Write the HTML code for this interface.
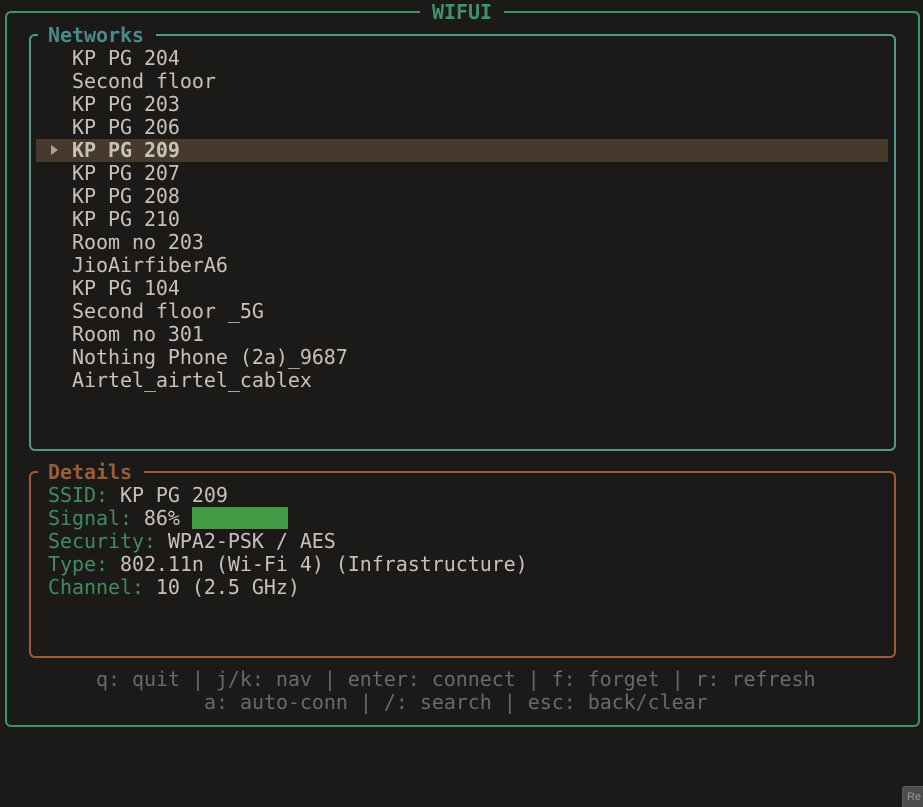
<!DOCTYPE html>
<html><head><meta charset="utf-8"><style>
html,body{margin:0;padding:0;background:#1c1a19;width:923px;height:807px;overflow:hidden}
body{position:relative;font-family:"DejaVu Sans Mono","Liberation Mono",monospace;font-size:20px;color:#c9c1b8;letter-spacing:-0.05px}
.t{position:absolute;line-height:23px;height:23px;white-space:pre}
.box{position:absolute;border:2px solid;border-radius:6px;box-sizing:border-box}
.gap{position:absolute;background:#1c1a19;height:6px}
.g{color:#3f8c5c}
</style></head><body>
<div class="box" style="left:5px;top:11px;width:915px;height:716px;border-color:#3d9466"></div>
<div class="gap" style="left:420px;top:9px;width:84px"></div>
<div class="t" style="left:432px;top:1px;color:#3d9466;font-weight:bold">WIFUI</div>

<div class="box" style="left:29px;top:34px;width:867px;height:417px;border-color:#4b9a8a"></div>
<div class="gap" style="left:38px;top:32px;width:118px"></div>
<div class="t" style="left:48px;top:24px;color:#4a8a88;font-weight:bold">Networks</div>

<div style="position:absolute;left:36px;top:139px;width:852px;height:23px;background:#463a2d"></div>
<svg style="position:absolute;left:50px;top:144px" width="10" height="12"><path d="M1 1 L8 6 L1 11 Z" fill="#a8a29c"/></svg>
<div class="t" style="left:72px;top:47px">KP PG 204</div>
<div class="t" style="left:72px;top:70px">Second floor</div>
<div class="t" style="left:72px;top:93px">KP PG 203</div>
<div class="t" style="left:72px;top:116px">KP PG 206</div>
<div class="t" style="left:72px;top:139px;font-weight:bold">KP PG 209</div>
<div class="t" style="left:72px;top:162px">KP PG 207</div>
<div class="t" style="left:72px;top:185px">KP PG 208</div>
<div class="t" style="left:72px;top:208px">KP PG 210</div>
<div class="t" style="left:72px;top:231px">Room no 203</div>
<div class="t" style="left:72px;top:254px">JioAirfiberA6</div>
<div class="t" style="left:72px;top:277px">KP PG 104</div>
<div class="t" style="left:72px;top:300px">Second floor _5G</div>
<div class="t" style="left:72px;top:323px">Room no 301</div>
<div class="t" style="left:72px;top:346px">Nothing Phone (2a)_9687</div>
<div class="t" style="left:72px;top:369px">Airtel_airtel_cablex</div>

<div class="box" style="left:29px;top:471px;width:867px;height:187px;border-color:#9a5c36"></div>
<div class="gap" style="left:38px;top:469px;width:106px"></div>
<div class="t" style="left:48px;top:461px;color:#9a5c36;font-weight:bold">Details</div>
<div class="t" style="left:48px;top:484px"><span class="g">SSID:</span> KP PG 209</div>
<div class="t" style="left:48px;top:507px"><span class="g">Signal:</span> 86%</div>
<div style="position:absolute;left:192px;top:507px;width:96px;height:22px;background:#439a45"></div>
<div class="t" style="left:48px;top:530px"><span class="g">Security:</span> WPA2-PSK / AES</div>
<div class="t" style="left:48px;top:553px"><span class="g">Type:</span> 802.11n (Wi-Fi 4) (Infrastructure)</div>
<div class="t" style="left:48px;top:576px"><span class="g">Channel:</span> 10 (2.5 GHz)</div>

<div class="t" style="left:96px;top:668px;color:#6b6866">q: quit | j/k: nav | enter: connect | f: forget | r: refresh</div>
<div class="t" style="left:204px;top:691px;color:#6b6866">a: auto-conn | /: search | esc: back/clear</div>

<div style="position:absolute;left:902px;top:786px;width:30px;height:30px;background:#4a4d4a;border-radius:3px;border:1px solid #5a5d5a;font-family:'Liberation Sans',sans-serif;font-size:11px;color:#999;padding:4px 0 0 4px;box-sizing:border-box">Re</div>
</body></html>
